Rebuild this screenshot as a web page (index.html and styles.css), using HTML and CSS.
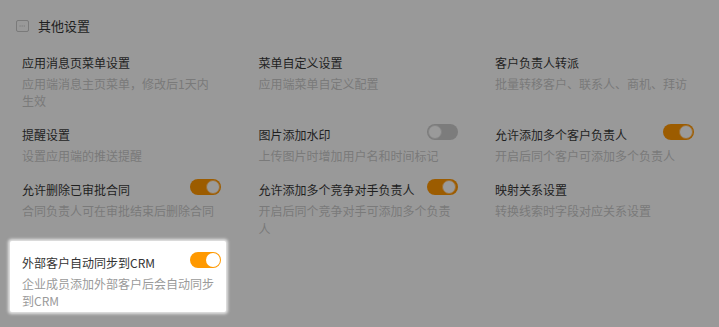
FILE: index.html
```html
<!DOCTYPE html>
<html lang="zh-CN">
<head>
<meta charset="utf-8">
<title>其他设置</title>
<link rel="stylesheet" href="styles.css">
</head>
<body>
<div class="page">
  <div class="section-head">
    <svg class="collapse-icon" width="13" height="12" viewBox="0 0 13 12">
      <rect x="0.5" y="0.5" width="12" height="11" rx="1.5" fill="none" stroke="#7a7a7a" stroke-width="1"/>
      <line x1="3.5" y1="6" x2="9.5" y2="6" stroke="#7a7a7a" stroke-width="1" stroke-dasharray="1.2 0.9"/>
    </svg>
    <span class="section-title">其他设置</span>
  </div>
  <div class="grid">
    <div class="item">
      <div class="item-head"><span class="item-title">应用消息页菜单设置</span></div>
      <div class="item-desc">应用端消息主页菜单，修改后1天内生效</div>
    </div>
    <div class="item">
      <div class="item-head"><span class="item-title">菜单自定义设置</span></div>
      <div class="item-desc">应用端菜单自定义配置</div>
    </div>
    <div class="item">
      <div class="item-head"><span class="item-title">客户负责人转派</span></div>
      <div class="item-desc">批量转移客户、联系人、商机、拜访</div>
    </div>

    <div class="item">
      <div class="item-head"><span class="item-title">提醒设置</span></div>
      <div class="item-desc">设置应用端的推送提醒</div>
    </div>
    <div class="item">
      <div class="item-head"><span class="item-title">图片添加水印</span><span class="switch"></span></div>
      <div class="item-desc">上传图片时增加用户名和时间标记</div>
    </div>
    <div class="item">
      <div class="item-head"><span class="item-title">允许添加多个客户负责人</span><span class="switch on"></span></div>
      <div class="item-desc">开启后同个客户可添加多个负责人</div>
    </div>

    <div class="item">
      <div class="item-head"><span class="item-title">允许删除已审批合同</span><span class="switch on"></span></div>
      <div class="item-desc">合同负责人可在审批结束后删除合同</div>
    </div>
    <div class="item">
      <div class="item-head"><span class="item-title">允许添加多个竞争对手负责人</span><span class="switch on"></span></div>
      <div class="item-desc">开启后同个竞争对手可添加多个负责人</div>
    </div>
    <div class="item">
      <div class="item-head"><span class="item-title">映射关系设置</span></div>
      <div class="item-desc">转换线索时字段对应关系设置</div>
    </div>

    <div class="item item-highlight">
      <div class="item-head"><span class="item-title">外部客户自动同步到CRM</span><span class="switch on"></span></div>
      <div class="item-desc">企业成员添加外部客户后会自动同步到CRM</div>
    </div>
  </div>
</div>
</body>
</html>
```

FILE: styles.css
```css
html, body {
  margin: 0;
  padding: 0;
  background: #999999;
  overflow: hidden;
}
body {
  font-family: "Noto Sans CJK SC", "Noto Sans", sans-serif;
  font-size: 12px;
  color: #1f1f1f;
}
.page {
  width: 719px;
  height: 327px;
}
.section-head {
  display: flex;
  align-items: center;
  padding: 16px 0 0 16px;
  height: 20px;
}
.collapse-icon {
  display: block;
  margin-right: 9px;
}
.section-title {
  font-size: 13px;
  line-height: 20px;
  color: #1f1f1f;
}
.grid {
  display: grid;
  grid-template-columns: repeat(3, 216px);
  column-gap: 20.5px;
  row-gap: 1.5px;
  padding: 0 20px 0 10px;
  margin-top: 4.5px;
  align-items: start;
}
.item {
  padding: 12px 5px 2px 12px;
}
.item-head {
  display: flex;
  justify-content: space-between;
  align-items: flex-start;
}
.item-title {
  line-height: 20px;
  color: #1f1f1f;
}
.item-desc {
  margin-top: 2px;
  padding-right: 4px;
  line-height: 17.5px;
  color: #7a7a7a;
}
.switch {
  position: relative;
  flex: none;
  width: 31px;
  height: 16px;
  margin-top: -1px;
  border-radius: 8px;
  background: #7c7c7c;
}
.switch::after {
  content: "";
  position: absolute;
  top: 1px;
  left: 1px;
  width: 14px;
  height: 14px;
  box-sizing: border-box;
  border-radius: 50%;
  background: #9a9a9a;
  border: 1px solid #858585;
}
.switch.on {
  background: #9c5c00;
}
.switch.on::after {
  left: auto;
  right: 1.5px;
  border-color: #a07030;
}
.item-highlight {
  background: #ffffff;
  border-radius: 2px;
  box-shadow: 0 0 3px 2px rgba(255, 255, 255, 0.75);
}
.item-highlight .item-title {
  color: #333333;
}
.item-highlight .item-desc {
  color: #9a9a9a;
}
.item-highlight .switch.on {
  background: #ff9900;
}
.item-highlight .switch.on::after {
  background: #ffffff;
  border: none;
}
```
